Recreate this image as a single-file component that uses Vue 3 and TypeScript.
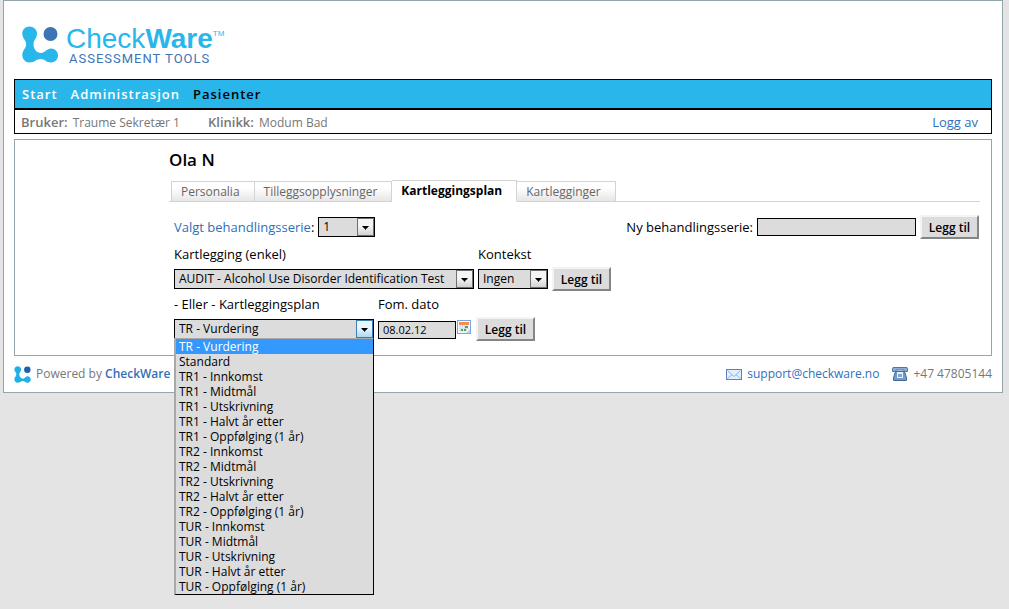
<script setup lang="ts">
import { ref } from 'vue'

const navItems = ['Start', 'Administrasjon', 'Pasienter']
const activeNav = 'Pasienter'
const tabs = ['Personalia', 'Tilleggsopplysninger', 'Kartleggingsplan', 'Kartlegginger']
const activeTab = ref('Kartleggingsplan')

const followUps = ['Innkomst', 'Midtmål', 'Utskrivning', 'Halvt år etter', 'Oppfølging (1 år)']
const plans: string[] = [
  'TR - Vurdering',
  'Standard',
  ...['TR1', 'TR2', 'TUR'].flatMap((p) => followUps.map((f) => `${p} - ${f}`)),
]
const plan = ref('TR - Vurdering')
const fromDate = ref('08.02.12')
const newSeries = ref('')
</script>

<template>
  <div class="page">
    <div class="frame">
      <header class="brand">
        <svg class="mark" viewBox="0 0 36 37" aria-hidden="true">
          <path
            d="M7.500 0.500C11.500 0.500 15 3.700 15 7.500C15 12.500 11.500 14 11.500 18C11.500 23 14.500 27 19 27C23 27 24.500 22.500 29 22.500C33 22.500 36 25.500 36 29.500C36 33.500 33 36.500 29 36.500C24 36.500 23 33 18.500 33C14 33 13 36.500 7.500 36.500C3.500 36.500 0.300 33.200 0.300 29C0.300 24 4.200 22.500 4.200 18C4.200 14 0.300 12.500 0.300 7.500C0.300 3.700 3.500 0.500 7.500 0.500Z"
            fill="#29b6eb"
          />
          <circle cx="28.500" cy="8" r="7" fill="#3d74b6" />
        </svg>
        <div class="wordmark">
          <div class="name">Check<b>Ware</b><sup>TM</sup></div>
          <div class="tagline">ASSESSMENT TOOLS</div>
        </div>
      </header>

      <nav class="nav">
        <a v-for="n in navItems" :key="n" href="#" :class="{ active: n === activeNav }">{{ n }}</a>
      </nav>
      <div class="userbar">
        <span><b>Bruker:</b> Traume Sekretær 1</span>
        <span><b>Klinikk:</b> Modum Bad</span>
        <a href="#" class="logout">Logg av</a>
      </div>

      <main class="panel">
        <h1>Ola N</h1>
        <div class="tabs" role="tablist">
          <button
            v-for="t in tabs"
            :key="t"
            type="button"
            role="tab"
            :aria-selected="t === activeTab"
            :class="{ active: t === activeTab }"
            @click="activeTab = t"
          >{{ t }}</button>
        </div>

        <div class="form">
          <div class="row series">
            <label for="series"><a href="#">Valgt behandlingsserie</a>:</label>
            <span class="select w-series">
              <select id="series"><option>1</option></select>
              <svg viewBox="0 0 17 18" aria-hidden="true"><path d="M5 8h7v1h-1v1h-1v1H9v1H8v-1H7v-1H6V9H5z" /></svg>
            </span>
            <label for="new-series" class="push">Ny behandlingsserie:</label>
            <input id="new-series" v-model="newSeries" class="w-new" type="text" />
            <button type="button" class="add">Legg til</button>
          </div>

          <div class="row">
            <div class="field w-single">
              <label for="single">Kartlegging (enkel)</label>
              <span class="select">
                <select id="single"><option>AUDIT - Alcohol Use Disorder Identification Test</option></select>
                <svg viewBox="0 0 17 18" aria-hidden="true"><path d="M5 8h7v1h-1v1h-1v1H9v1H8v-1H7v-1H6V9H5z" /></svg>
              </span>
            </div>
            <div class="field w-context">
              <label for="context">Kontekst</label>
              <span class="select">
                <select id="context"><option>Ingen</option></select>
                <svg viewBox="0 0 17 18" aria-hidden="true"><path d="M5 8h7v1h-1v1h-1v1H9v1H8v-1H7v-1H6V9H5z" /></svg>
              </span>
            </div>
            <button type="button" class="add">Legg til</button>
          </div>

          <div class="row">
            <div class="field w-plan">
              <label for="plan">- Eller - Kartleggingsplan</label>
              <span class="select open">
                <select id="plan" v-model="plan">
                  <option v-for="p in plans" :key="p">{{ p }}</option>
                </select>
                <svg viewBox="0 0 17 18" aria-hidden="true"><path d="M5 8h7v1h-1v1h-1v1H9v1H8v-1H7v-1H6V9H5z" /></svg>
              </span>
              <ul class="menu" role="listbox" aria-label="Kartleggingsplan">
                <li
                  v-for="p in plans"
                  :key="p"
                  role="option"
                  :aria-selected="p === plan"
                  :class="{ chosen: p === plan }"
                  @click="plan = p"
                >{{ p }}</li>
              </ul>
            </div>
            <div class="field w-date">
              <label for="date">Fom. dato</label>
              <input id="date" v-model="fromDate" type="text" />
            </div>
            <button type="button" class="calendar" aria-label="Velg dato">
              <svg viewBox="0 0 14 14" aria-hidden="true">
                <rect x="0.500" y="0.500" width="13" height="13" fill="#f4f8ff" stroke="#7fa3dc" />
                <rect x="2" y="2" width="10" height="3" fill="#f58d4c" />
                <path d="M2 6.500h10M2 8.500h10M2 10.500h8M3.500 5v7M5.500 5v7M7.500 5v7M9.500 5v6" stroke="#d3deee" fill="none" />
                <path d="M8 6h3v2H8zM4 9h2v2H4zM7 9h2v2H7z" fill="#4fa84b" />
                <path d="M13 9v4H9z" fill="#b8d3f7" />
              </svg>
            </button>
            <button type="button" class="add">Legg til</button>
          </div>
        </div>
      </main>

      <footer class="footer">
        <svg class="mini" viewBox="0 0 36 37" aria-hidden="true">
          <path
            d="M7.500 0.500C11.500 0.500 15 3.700 15 7.500C15 12.500 11 14 11 18C11 23 14.500 27.500 19 27.500C23 27.500 24.500 22.500 29 22.500C33 22.500 36 25.500 36 29.500C36 33.500 33 36.500 29 36.500C24 36.500 23 32.500 18.500 32.500C14 32.500 13 36.500 7.500 36.500C3.500 36.500 0.300 33.200 0.300 29C0.300 24 4.700 22.500 4.700 18C4.700 14 0.300 12.500 0.300 7.500C0.300 3.700 3.500 0.500 7.500 0.500Z"
            fill="#1fb0e8"
          />
          <circle cx="28.500" cy="8" r="7" fill="#1f5fae" />
        </svg>
        <span>Powered by <a href="#" class="strong">CheckWare</a></span>
        <svg class="mail push" viewBox="0 0 16 11" aria-hidden="true">
          <rect x="0.500" y="0.500" width="15" height="10" fill="#e3effc" stroke="#5585c0" />
          <path d="M1.500 1.500L8 7.500L14.500 1.500M1.500 9.500L6 5.500M14.500 9.500L10 5.500" fill="none" stroke="#8fb4e0" />
        </svg>
        <a href="#">support@checkware.no</a>
        <svg class="phone" viewBox="0 0 16 14" aria-hidden="true">
          <path d="M1 0.500h14l0.500 1.500v2.500h-3.500V3H4v1.500H0.500V2z" fill="#8fb0d6" stroke="#4f78aa" />
          <path d="M3.500 4.500h9l2 6v3h-13v-3z" fill="#6f9aca" stroke="#416a9c" />
          <rect x="5" y="5" width="6" height="6" fill="#e6f0fa" />
          <rect x="6" y="7" width="4" height="3" fill="#7fa5d0" />
        </svg>
        <span>+47 47805144</span>
      </footer>
    </div>
  </div>
</template>

<style>
body {
  background: #e4e4e4;
}
</style>

<style scoped>
.page {
  min-height: 100vh;
}
.frame {
  box-sizing: border-box;
  margin: 0 6px 0 3px;
  padding: 0 10px;
  border: 1px solid #93a6ab;
  background: #fff;
  color: #000;
  font: 13px/18px "Trebuchet MS", "Open Sans", "Noto Sans", sans-serif;
}
a {
  color: #2f6fbb;
  text-decoration: none;
}
button,
input,
select {
  font: inherit;
  border-radius: 0;
}
.push {
  margin-left: auto;
}
.brand {
  display: flex;
  gap: 8px;
  height: 53px;
  padding: 25px 8px 0;
}
.mark {
  width: 36px;
  height: 37px;
}
.wordmark {
  font-family: "Liberation Sans", Arial, sans-serif;
  color: #29b6eb;
}
.name {
  font-size: 28px;
  line-height: 26px;
}
.name sup {
  font-size: 8px;
  line-height: 8px;
  vertical-align: 12px;
}
.tagline {
  padding-left: 3px;
  font-family: Roboto, sans-serif;
  font-size: 13px;
  line-height: 13px;
  letter-spacing: 1px;
  color: #3d74b6;
}
.nav {
  display: flex;
  gap: 13px;
  padding: 0 7px;
  border: 1px solid #000;
  background: #29b6eb;
  font-weight: 600;
  line-height: 28px;
  letter-spacing: 1px;
}
.nav a {
  color: #fff;
}
.nav a.active {
  color: #000;
}
.userbar {
  display: flex;
  gap: 28px;
  height: 22px;
  padding: 1px 13px 0 6px;
  border: 1px solid #000;
  color: #777;
  font-size: 12px;
  line-height: 22px;
}
.userbar b {
  margin-right: 2px;
  font-size: 13px;
  font-weight: 600;
}
.logout {
  margin-left: auto;
  font-size: 13px;
}
.panel {
  margin-top: 5px;
  padding: 8px 11px 16px 154px;
  border: 1px solid #93a6ab;
}
h1 {
  margin: 0;
  font-size: 17px;
  font-weight: 600;
  line-height: 24px;
}
.tabs {
  display: flex;
  align-items: flex-end;
  margin-top: 8px;
  padding-left: 2px;
  border-bottom: 1px solid #d3d3d3;
}
.tabs button {
  height: 21px;
  margin: 0 0 -1px;
  padding: 0 14px 0 9px;
  border: 1px solid #d3d3d3;
  border-left-width: 0;
  background: linear-gradient(#fff 30%, #e6e6e6);
  color: #666;
  font-size: 12px;
  line-height: 18px;
}
.tabs button:first-child {
  border-left-width: 1px;
}
.tabs button.active {
  height: 22px;
  border-bottom-color: #fff;
  background: #fff;
  color: #000;
  font-weight: 700;
}
.form {
  display: flex;
  flex-direction: column;
  gap: 6px;
  padding: 13px 0 0 5px;
}
.row {
  display: flex;
  align-items: flex-end;
  gap: 4px;
}
.series {
  align-items: center;
}
.field {
  position: relative;
  display: flex;
  flex-direction: column;
  gap: 6px;
}
.select {
  display: grid;
  grid-template-columns: 1fr 17px;
  align-items: center;
  box-sizing: border-box;
  height: 20px;
  border: 1px solid #000;
  background: #dcdcdc;
}
.select select {
  grid-area: 1 / 1 / 2 / 3;
  width: 100%;
  height: 18px;
  padding: 0 18px 0 4px;
  border: 0;
  appearance: none;
  background: transparent;
  color: #000;
  font-size: 12px;
  line-height: 18px;
}
.select svg {
  grid-area: 1 / 2;
  box-sizing: border-box;
  width: 17px;
  height: 18px;
  border: 1px solid #707070;
  background: linear-gradient(#f4f4f4 45%, #d2d2d2);
  pointer-events: none;
}
.select.open svg {
  border-color: #3c7fb1;
  background: linear-gradient(#e9f6fd 45%, #a9d9f5);
}
.w-series {
  width: 57px;
}
.w-single {
  width: 300px;
}
.w-context {
  width: 70px;
}
.w-plan {
  width: 200px;
}
.w-date {
  align-self: stretch;
  justify-content: space-between;
  width: 78px;
}
.w-new {
  width: 159px;
}
input {
  box-sizing: border-box;
  height: 18px;
  padding: 0 4px;
  border: 1px solid #000;
  background: #dcdcdc;
  font-size: 11px;
}
.add {
  width: 59px;
  height: 24px;
  margin: 0 1px -2px 0;
  padding: 2px 0 0;
  border: 2px solid;
  border-color: #f4f4f4 #858585 #858585 #f4f4f4;
  background: #dcdcdc;
  color: #000;
  font-size: 12px;
  font-weight: 600;
  line-height: 18px;
}
.series .add {
  margin: 0 1px 0 0;
}
.calendar {
  width: 14px;
  height: 14px;
  margin: 0 1px 5px -3px;
  padding: 0;
  border: 0;
  background: none;
}
.calendar svg {
  display: block;
}
.menu {
  position: absolute;
  top: 100%;
  left: 0;
  z-index: 1;
  box-sizing: border-box;
  width: 100%;
  margin: -1px 0 0;
  padding: 0;
  border: solid;
  border-width: 1px 1px 1px 2px;
  border-color: #a9a9a9 #000 #000 #a9a9a9;
  background: #dcdcdc;
  list-style: none;
  font-size: 12px;
  line-height: 15px;
}
.menu li {
  padding-left: 3px;
}
.menu .chosen {
  background: #3399ff;
  color: #fff;
}
.footer {
  display: flex;
  align-items: center;
  gap: 5px;
  height: 36px;
  color: #777;
  font-size: 12px;
}
.mini {
  width: 17px;
  height: 17px;
}
.strong {
  font-weight: 600;
}
.mail {
  width: 16px;
  height: 11px;
}
.phone {
  width: 16px;
  height: 14px;
  margin-left: 8px;
}
</style>
